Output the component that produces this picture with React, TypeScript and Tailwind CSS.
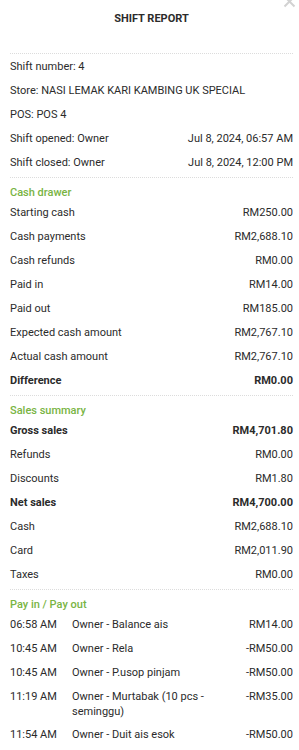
import React from "react"

interface RowProps {
  label: string
  value: string
  bold?: boolean
}

const Row = ({ label, value, bold }: RowProps) => {
  return (
    <div className={"flex justify-between py-1 leading-4 " + (bold ? "font-bold" : "")}>
      <span>{label}</span>
      <span>{value}</span>
    </div>
  )
}

const Header = ({ title }: { title: string }) => {
  return <div className="pt-[7px] font-medium leading-4 text-[#79b443]">{title}</div>
}

const Divider = () => <div className="border-t border-dotted border-[#dcdcdc]" />

const payments = [
  { time: "06:58 AM", desc: "Owner - Balance ais", amount: "RM14.00" },
  { time: "10:45 AM", desc: "Owner - Rela", amount: "-RM50.00" },
  { time: "10:45 AM", desc: "Owner - P.usop pinjam", amount: "-RM50.00" },
  { time: "11:19 AM", desc: "Owner - Murtabak (10 pcs - seminggu)", amount: "-RM35.00" },
  { time: "11:54 AM", desc: "Owner - Duit ais esok", amount: "-RM50.00" },
]

export default function App() {
  return (
    <div
      className="relative min-h-[750px] bg-white pl-[10px] pr-[6px] text-[11px] text-[#2b2b2b]"
      style={{ fontFamily: "Roboto, 'Liberation Sans', sans-serif" }}
    >
      <div className="absolute right-[3px] top-[-5px] text-[#d2d2d2]">
        <svg width="13" height="13" viewBox="0 0 13 13">
          <path d="M1.5 1.5 L11.5 11.5 M11.5 1.5 L1.5 11.5" stroke="currentColor" strokeWidth="2" />
        </svg>
      </div>

      <div className="pt-[11px] text-center font-bold leading-4">SHIFT REPORT</div>
      <div className="mt-[26px]">
        <Divider />
      </div>

      <div className="pt-[1px] pb-[2px]">
        <div className="py-1 leading-4">Shift number: 4</div>
        <div className="py-1 leading-4">Store: NASI LEMAK KARI KAMBING UK SPECIAL</div>
        <div className="py-1 leading-4">POS: POS 4</div>
        <Row label="Shift opened: Owner" value="Jul 8, 2024, 06:57 AM" />
        <Row label="Shift closed: Owner" value="Jul 8, 2024, 12:00 PM" />
      </div>
      <Divider />

      <div className="pb-[2px]">
        <Header title="Cash drawer" />
        <Row label="Starting cash" value="RM250.00" />
        <Row label="Cash payments" value="RM2,688.10" />
        <Row label="Cash refunds" value="RM0.00" />
        <Row label="Paid in" value="RM14.00" />
        <Row label="Paid out" value="RM185.00" />
        <Row label="Expected cash amount" value="RM2,767.10" />
        <Row label="Actual cash amount" value="RM2,767.10" />
        <Row label="Difference" value="RM0.00" bold />
      </div>
      <Divider />

      <div className="pb-[2px]">
        <Header title="Sales summary" />
        <Row label="Gross sales" value="RM4,701.80" bold />
        <Row label="Refunds" value="RM0.00" />
        <Row label="Discounts" value="RM1.80" />
        <Row label="Net sales" value="RM4,700.00" bold />
        <Row label="Cash" value="RM2,688.10" />
        <Row label="Card" value="RM2,011.90" />
        <Row label="Taxes" value="RM0.00" />
      </div>
      <Divider />

      <div className="pb-[2px]">
        <Header title="Pay in / Pay out" />
        {payments.map((p, i) => (
          <div key={i} className="flex py-1 leading-4">
            <span className="w-[62px] shrink-0">{p.time}</span>
            <span className="flex-1 pr-3 leading-[15px]">{p.desc}</span>
            <span className="shrink-0 text-right">{p.amount}</span>
          </div>
        ))}
      </div>
    </div>
  )
}
